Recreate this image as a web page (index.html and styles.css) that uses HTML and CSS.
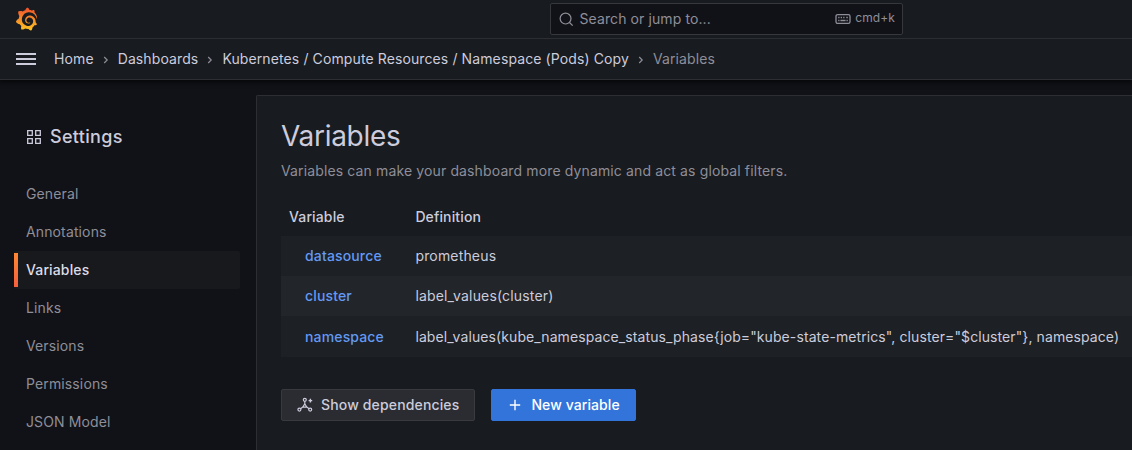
FILE: index.html
```html
<!DOCTYPE html>
<html lang="en">
<head>
<meta charset="utf-8">
<title>Variables - Settings</title>
<link rel="stylesheet" href="styles.css">
</head>
<body>
<header class="top">
  <div class="topbar">
    <svg class="logo" viewBox="0 0 24 24"><defs><linearGradient id="flame" x1="0" y1="1" x2="0" y2="0"><stop offset="0" stop-color="#fcc624"/><stop offset="1" stop-color="#f1502b"/></linearGradient></defs><path fill="url(#flame)" d="M23.02 10.59a8.578 8.578 0 0 0-.862-3.034 8.911 8.911 0 0 0-1.789-2.445c.337-1.342-.413-2.505-.413-2.505-1.292-.08-2.113.4-2.416.62-.052-.02-.102-.044-.154-.064-.22-.089-.446-.172-.677-.247-.231-.073-.47-.14-.711-.197a9.867 9.867 0 0 0-.875-.161C14.557.753 12.94 0 12.94 0c-1.804 1.145-2.147 2.744-2.147 2.744l-.018.093c-.098.029-.2.057-.298.088-.138.042-.275.094-.413.143-.138.055-.275.107-.41.166a8.869 8.869 0 0 0-1.557.87l-.063-.029c-2.497-.955-4.716.195-4.716.195-.203 2.658.996 4.33 1.235 4.636a11.608 11.608 0 0 0-.607 2.635C1.636 12.677.953 15.014.953 15.014c1.926 2.214 4.171 2.351 4.171 2.351.003-.002.006-.002.006-.005.285.509.615.994.986 1.446.156.19.32.371.488.548-.704 2.009.099 3.68.099 3.68 2.144.08 3.553-.937 3.849-1.173a9.784 9.784 0 0 0 3.164.501h.08l.055-.003.107-.002.103-.005.003.002c1.01 1.44 2.788 1.646 2.788 1.646 1.264-1.332 1.337-2.653 1.337-2.94v-.058c0-.02-.003-.039-.003-.06.265-.187.52-.387.758-.6a7.875 7.875 0 0 0 1.415-1.7c1.43.083 2.437-.885 2.437-.885-.236-1.49-1.085-2.216-1.264-2.354l-.018-.013-.016-.013a.217.217 0 0 1-.031-.02c.008-.092.016-.18.02-.27.011-.162.016-.323.016-.48v-.253l-.005-.098-.008-.135a1.891 1.891 0 0 0-.01-.13c-.003-.042-.008-.083-.013-.125l-.016-.124-.018-.122a6.215 6.215 0 0 0-2.032-3.73 6.015 6.015 0 0 0-3.222-1.46 6.292 6.292 0 0 0-.85-.048l-.107.002h-.063l-.044.003-.104.008a4.777 4.777 0 0 0-3.335 1.695c-.332.4-.592.84-.768 1.297a4.594 4.594 0 0 0-.312 1.817l.003.091c.005.055.007.11.013.164a3.615 3.615 0 0 0 .698 1.82 3.53 3.53 0 0 0 1.827 1.282c.33.098.66.14.971.137.039 0 .078 0 .114-.002l.063-.003c.02 0 .041-.003.062-.003.034-.002.065-.007.099-.01.007 0 .018-.003.028-.003l.031-.005.06-.008a1.18 1.18 0 0 0 .112-.02c.036-.008.072-.013.109-.024a2.634 2.634 0 0 0 .914-.415c.028-.02.056-.041.085-.065a.248.248 0 0 0 .039-.35.244.244 0 0 0-.309-.06l-.078.042c-.09.044-.184.083-.283.116a2.476 2.476 0 0 1-.475.096c-.028.003-.054.006-.083.006l-.083.002c-.026 0-.054 0-.08-.002l-.102-.006h-.012l-.024.006c-.016-.003-.031-.003-.044-.006-.031-.002-.06-.007-.091-.01a2.59 2.59 0 0 1-.724-.213 2.557 2.557 0 0 1-.667-.438 2.52 2.52 0 0 1-.805-1.475 2.306 2.306 0 0 1-.029-.444l.006-.122v-.023l.002-.031c.003-.021.003-.04.005-.06a3.163 3.163 0 0 1 1.352-2.29 3.12 3.12 0 0 1 .937-.43 2.946 2.946 0 0 1 .776-.101h.06l.07.002.045.003h.026l.07.005a4.041 4.041 0 0 1 1.635.49 3.94 3.94 0 0 1 1.602 1.662 3.77 3.77 0 0 1 .397 1.414l.005.076.003.075c.002.026.002.05.002.075 0 .024.003.052 0 .07v.065l-.002.073-.008.174a6.195 6.195 0 0 1-.08.639 5.1 5.1 0 0 1-.267.927 5.31 5.31 0 0 1-.624 1.13 5.052 5.052 0 0 1-3.237 2.014 4.82 4.82 0 0 1-.649.066l-.039.003h-.287a6.607 6.607 0 0 1-1.716-.265 6.776 6.776 0 0 1-3.4-2.274 6.75 6.75 0 0 1-.746-1.15 6.616 6.616 0 0 1-.714-2.596l-.005-.083-.002-.02v-.056l-.003-.073v-.096l-.003-.104v-.07l.003-.163c.008-.22.026-.45.054-.678a8.707 8.707 0 0 1 .28-1.355c.128-.444.286-.872.473-1.277a7.04 7.04 0 0 1 1.456-2.1 5.925 5.925 0 0 1 .953-.763c.169-.111.343-.213.524-.306.089-.05.182-.091.273-.135.047-.02.093-.042.138-.062a7.177 7.177 0 0 1 .714-.267l.145-.045c.049-.015.098-.026.148-.041.098-.029.197-.052.296-.076.049-.013.1-.02.15-.033l.15-.032.151-.028.076-.013.075-.01.153-.024c.057-.01.114-.013.171-.023l.169-.021c.036-.003.073-.008.106-.01l.073-.008.036-.003.042-.002c.057-.003.114-.008.171-.01l.086-.006h.023l.037-.003.145-.007a7.999 7.999 0 0 1 1.708.125 7.917 7.917 0 0 1 2.048.68 8.253 8.253 0 0 1 1.672 1.09l.09.077.089.078c.06.052.114.107.171.159.057.052.112.106.166.16.052.055.107.107.159.164a8.671 8.671 0 0 1 1.41 1.978c.012.026.028.052.04.078l.04.078.075.156c.023.051.05.1.07.153l.065.15a8.848 8.848 0 0 1 .45 1.34.19.19 0 0 0 .201.142.186.186 0 0 0 .172-.184c.01-.246.002-.532-.024-.856z"/></svg>
    <div class="search">
      <svg class="search-icon" viewBox="0 0 16 16"><circle cx="7" cy="7" r="5.8"/><path d="M11.2 11.2l3.4 3.4"/></svg>
      <span class="search-text">Search or jump to...</span>
      <svg class="keyboard" viewBox="0 0 16 12"><rect x="1" y="1.6" width="14" height="8.8" rx="1.6"/><path d="M3.2 4.5h1.3M5.7 4.5h1.3M8.2 4.5h1.3M11.3 4.5h1.5M3.2 7.5h1.3M5.4 7.5h5.2M11.5 7.5h1.3"/></svg>
      <span class="shortcut">cmd+k</span>
    </div>
  </div>
  <nav class="crumbs">
    <svg class="menu" viewBox="0 0 20 14"><path d="M0 2h20M0 7h20M0 12h20"/></svg>
    <a>Home</a>
    <svg class="chev" viewBox="0 0 6 8"><path d="M1.2 1l3 3-3 3"/></svg>
    <a>Dashboards</a>
    <svg class="chev" viewBox="0 0 6 8"><path d="M1.2 1l3 3-3 3"/></svg>
    <a>Kubernetes / Compute Resources / Namespace (Pods) Copy</a>
    <svg class="chev" viewBox="0 0 6 8"><path d="M1.2 1l3 3-3 3"/></svg>
    <span class="current">Variables</span>
  </nav>
</header>
<div class="page">
  <aside class="side">
    <h2 class="side-title"><svg class="apps" viewBox="0 0 14 14"><path d="M.7.7h4.6v4.6H.7zM8.7.7h4.6v4.6H8.7zM.7 8.7h4.6v4.6H.7zM8.7 8.7h4.6v4.6H8.7z"/></svg>Settings</h2>
    <a class="item">General</a>
    <a class="item">Annotations</a>
    <a class="item active">Variables</a>
    <a class="item">Links</a>
    <a class="item">Versions</a>
    <a class="item">Permissions</a>
    <a class="item">JSON Model</a>
  </aside>
  <main class="panel">
    <h1 class="title">Variables</h1>
    <p class="subtitle">Variables can make your dashboard more dynamic and act as global filters.</p>
    <div class="table">
      <div class="row head"><span>Variable</span><span>Definition</span></div>
      <div class="row"><a class="name">datasource</a><span class="def">prometheus</span></div>
      <div class="row alt"><a class="name">cluster</a><span class="def">label_values(cluster)</span></div>
      <div class="row last"><a class="name">namespace</a><span class="def long">label_values(kube_namespace_status_phase{job="kube-state-metrics", cluster="$cluster"}, namespace)</span></div>
    </div>
    <div class="actions">
      <button class="btn secondary"><svg class="deps" viewBox="0 0 16 16"><circle cx="7.8" cy="2.8" r="1.5"/><circle cx="2.4" cy="12.6" r="1.5"/><circle cx="13.2" cy="12.6" r="1.5"/><path d="M7.8 4.2v2.6M5.8 10.1l-2.3 1.6M9.8 10.1l2.3 1.6M7.8 6.8L5.8 10.1h4z"/><path class="spark" d="M13.4 1.8v3.6M11.6 3.6h3.6"/></svg>Show dependencies</button>
      <button class="btn primary"><svg class="plus" viewBox="0 0 12 12"><path d="M6 .8v10.4M.8 6h10.4"/></svg>New variable</button>
    </div>
  </main>
</div>
</body>
</html>
```
FILE: styles.css
```css
* { box-sizing: border-box; }
body {
  margin: 0;
  height: 450px;
  overflow: hidden;
  display: flex;
  flex-direction: column;
  background: #111217;
  color: #ccccdc;
  font: 14px/22px Inter, sans-serif;
  letter-spacing: 0.13px;
}
svg { flex: none; fill: none; stroke: currentColor; }
.top {
  flex: none;
  background: #181b1f;
  border-bottom: 1px solid #2c2e33;
  box-shadow: 0 1px 5px 1px #050608;
}
.topbar {
  height: 39px;
  padding-left: 15px;
  display: flex;
  align-items: center;
  border-bottom: 1px solid #2c2e33;
}
.logo { width: 23px; height: 24px; stroke: none; }
.search {
  width: 353px;
  height: 32px;
  margin-left: 512px;
  padding: 0 7px 0 8px;
  display: flex;
  align-items: center;
  background: #111217;
  border: 1px solid #36373d;
  border-radius: 2px;
  color: #8e8e99;
}
.search-icon { width: 15px; height: 15px; stroke-width: 1.3; }
.search-text { margin-left: 5.5px; letter-spacing: 0.1px; }
.keyboard { width: 16px; height: 12px; margin-left: auto; stroke-width: 1.3; }
.shortcut { margin: -3px 0 0 4px; font-size: 12px; letter-spacing: 0.1px; }
.crumbs {
  height: 40px;
  padding-left: 16px;
  display: flex;
  align-items: center;
  letter-spacing: 0.11px;
}
.menu { width: 20px; height: 14px; margin-right: 18px; stroke-width: 2; }
.chev { width: 6px; height: 8px; margin: 2px 9px 0; color: #8e8e99; stroke-width: 1.2; }
.current { color: #8e8e99; }
.page { flex: 1; display: flex; min-height: 0; }
.side { flex: none; width: 256px; padding: 45px 16px 0 14px; }
.side-title {
  display: flex;
  align-items: center;
  gap: 9px;
  margin: 0 0 26px;
  padding-left: 13px;
  font-size: 18px;
  font-weight: 500;
  line-height: 24px;
  letter-spacing: 0.32px;
}
.apps { width: 14px; height: 14px; stroke-width: 1.3; }
.item {
  display: block;
  height: 38px;
  padding: 8px 12px;
  color: #8e8e99;
}
.active {
  color: #dcdce8;
  font-weight: 500;
  border-radius: 2px;
  background: linear-gradient(#ff8833, #f55f3e) 0 2px / 4px 34px no-repeat, #18191d;
}
.panel {
  flex: 1;
  min-width: 0;
  margin-top: 15px;
  padding: 24px 0 0 24px;
  background: #181b1f;
  border: 1px solid #2c2e33;
  border-width: 1px 0 0 1px;
  border-radius: 2px 0 0 0;
}
.title { margin: 0 0 8px; font-size: 28px; font-weight: 400; line-height: 32px; letter-spacing: -0.3px; }
.subtitle { margin: 0 0 24px; color: #8e8e99; }
.row {
  height: 40px;
  display: grid;
  grid-template-columns: 126.4px 1fr;
  align-items: center;
  padding-left: 8px;
  white-space: nowrap;
  background: #1d2024;
}
.head { height: 30px; align-items: start; background: none; font-weight: 500; }
.alt { background: #22252a; }
.last { height: 41px; }
.name { padding-left: 16px; color: #6299f3; font-weight: 500; letter-spacing: 0.15px; }
.def { letter-spacing: 0.17px; }
.long { letter-spacing: 0.095px; }
.actions { display: flex; gap: 16px; margin-top: 32px; }
.btn {
  height: 32px;
  padding: 0 15px;
  display: flex;
  align-items: center;
  border: 1px solid #393a40;
  border-radius: 2px;
  background: #2b2c31;
  color: #ccccdc;
  font: 500 14px/22px Inter, sans-serif;
  letter-spacing: 0.15px;
}
.primary { padding-left: 17px; background: #3274d9; border-color: #3274d9; color: #fff; letter-spacing: 0.08px; }
.deps { width: 16px; height: 16px; margin-right: 8px; stroke-width: 1.2; }
.spark { stroke-width: 1.4; }
.plus { width: 12px; height: 12px; margin-right: 10px; stroke-width: 1.4; }
```
